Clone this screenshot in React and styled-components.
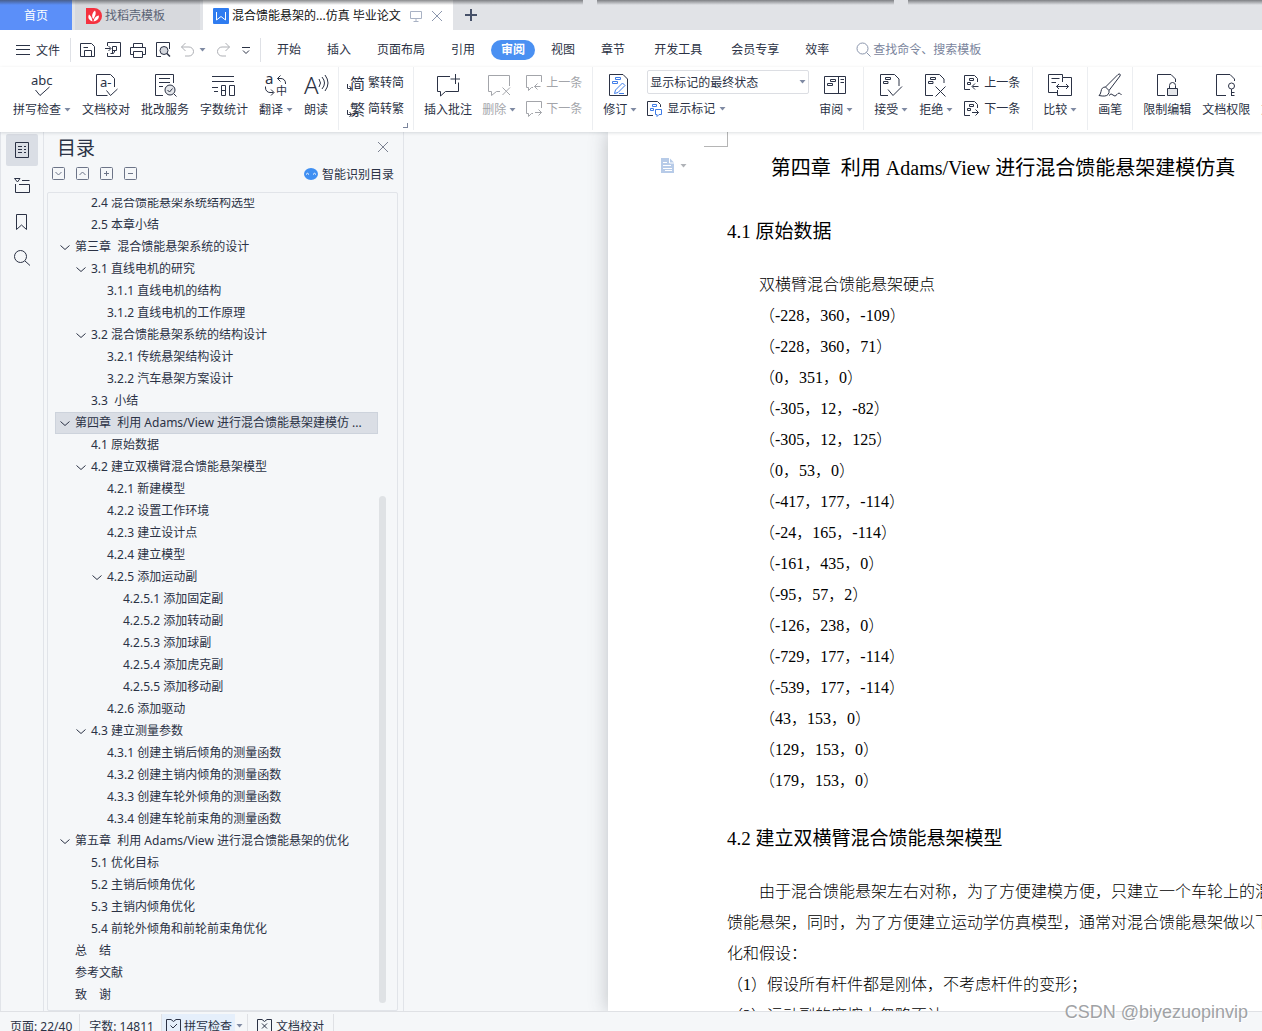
import React from "react";
import styled, { createGlobalStyle, css } from "styled-components";

const GlobalStyle = createGlobalStyle`
  * {
    box-sizing: border-box;
  }
  body {
    margin: 0;
    overflow: hidden;
    font-family: "Noto Sans", "Noto Sans CJK SC", sans-serif;
    font-size: 12px;
    color: #2b3245;
  }
  button {
    margin: 0;
    padding: 0;
    border: none;
    background: none;
    font: inherit;
    color: inherit;
    cursor: pointer;
  }
`;

const Window = styled.div`
  display: flex;
  flex-direction: column;
  height: calc(100vh + 10px);
  background: #f5f7f9;
`;

/* tab strip */

const TabStrip = styled.header`
  position: relative;
  display: flex;
  flex: none;
  gap: 3px;
  height: 30px;
  background: #e1e3e7;
`;

const EdgeShadow = styled.div`
  position: absolute;
  top: 0;
  left: 0;
  right: 0;
  height: 5px;
  display: flex;
  gap: 14px;
  pointer-events: none;
`;

const ShadowPart = styled.span`
  flex: ${(props) => props.$grow};
  background: linear-gradient(rgba(60, 62, 66, 0.6), rgba(60, 62, 66, 0));
`;

const FileTab = styled.button`
  display: flex;
  align-items: center;
  gap: 3px;
  width: ${(props) => props.$width}px;
  padding: 2px 10px 0 11px;
  line-height: 18px;
  white-space: nowrap;
  color: #5b6375;
  background: #d7d9dd;

  ${(props) =>
    props.$home &&
    css`
      justify-content: center;
      padding: 2px 0 0;
      color: #fff;
      background: #5b8ff9;
    `}

  ${(props) =>
    props.$active &&
    css`
      padding-left: 10px;
      color: #111;
      background: #fff;
    `}
`;

const TabTools = styled.span`
  display: flex;
  gap: 9px;
  margin-left: 6px;
`;

const NewTab = styled.button`
  width: 30px;
  display: flex;
  align-items: center;
  justify-content: center;
`;

/* menu row */

const MenuRow = styled.div`
  display: flex;
  flex: none;
  align-items: center;
  height: 37px;
  padding: 2px 0 0 16px;
  background: #fff;
  white-space: nowrap;
`;

const FileMenu = styled.button`
  display: flex;
  align-items: center;
  gap: 6px;
  padding-right: 10px;
`;

const QuickTools = styled.div`
  display: flex;
  align-items: center;
  gap: 9px;
  height: 24px;
  padding: 0 8px 0 9px;
  border-left: 1px solid #dfe1e6;
  border-right: 1px solid #dfe1e6;
`;

const QuickButton = styled.button`
  display: flex;
  align-items: center;
  gap: 3px;
`;

const MenuTabs = styled.nav`
  display: flex;
  gap: 6px;
  padding: 0 6px;
`;

const MenuTab = styled.button`
  height: 20px;
  padding: 0 10px;
  line-height: 20px;
  border-radius: 10px;
  margin-right: ${(props) => (props.$wide ? 3 : 0)}px;

  ${(props) =>
    props.$active &&
    css`
      color: #fff;
      font-weight: 700;
      background: #4a90f2;
    `}
`;

const SearchBox = styled.label`
  display: flex;
  align-items: center;
  gap: 2px;
  margin-left: 11px;
`;

const SearchInput = styled.input`
  width: 150px;
  padding: 0;
  border: none;
  outline: none;
  font: inherit;
  background: none;

  &::placeholder {
    color: #7a849c;
    opacity: 1;
  }
`;

/* ribbon */

const Ribbon = styled.div`
  position: relative;
  z-index: 1;
  display: flex;
  flex: none;
  height: 65px;
  padding-left: 3px;
  background: #fff;
  box-shadow: 0 1px 3px rgba(40, 50, 70, 0.16);
  white-space: nowrap;
`;

const Group = styled.div`
  position: relative;
  display: flex;
  flex: none;
  gap: ${(props) => props.$gap || 11}px;
  height: 63px;
  padding: 5px ${(props) => props.$right || 10}px 0 ${(props) => props.$left || 10}px;
  border-right: 1px solid #eceef1;
`;

const BigButton = styled.button`
  display: flex;
  flex-direction: column;
  align-items: center;
  gap: 4px;
  height: 48px;
  padding-top: 1px;
  color: ${(props) => (props.$dim ? "#a3a5aa" : "inherit")};
`;

const Label = styled.span`
  display: flex;
  align-items: center;
  gap: 3px;
  line-height: 18px;
`;

const Stack = styled.div`
  display: flex;
  flex-direction: column;
  align-items: flex-start;
  gap: 6px;
`;

const SmallButton = styled.button`
  display: flex;
  align-items: center;
  gap: 4px;
  height: 20px;
  padding-top: 2px;
  line-height: 18px;
  color: ${(props) => (props.$dim ? "#a3a5aa" : "inherit")};
`;

const SelectBox = styled.label`
  position: relative;
  display: flex;
  align-items: center;
  margin: -2px 0;

  svg {
    position: absolute;
    right: 3px;
    pointer-events: none;
  }
`;

const Select = styled.select`
  appearance: none;
  width: 162px;
  height: 24px;
  padding: 0 2px;
  border: 1px solid #dcdee3;
  border-radius: 2px;
  background: #fff;
  font: inherit;
  color: inherit;
`;

const GroupCorner = styled.span`
  position: absolute;
  right: 5px;
  bottom: 2px;
  width: 5px;
  height: 5px;
  border-right: 1px solid #7a849c;
  border-bottom: 1px solid #7a849c;
`;

/* body */

const Main = styled.main`
  display: flex;
  flex: 1;
  min-height: 0;
`;

const SideBar = styled.aside`
  display: flex;
  flex: none;
  flex-direction: column;
  gap: 4px;
  padding: 2px 5px;
  border: solid #e1e4e9;
  border-width: 0 1px;
`;

const SideButton = styled.button`
  display: flex;
  align-items: center;
  justify-content: center;
  width: 32px;
  height: 32px;
  border-radius: 2px;
  background: ${(props) => (props.$active ? "#dadee5" : "none")};
`;

const Outline = styled.section`
  display: flex;
  flex: none;
  flex-direction: column;
  width: 360px;
  padding: 0 5px 0 3px;
  border-right: 1px solid #e1e4e9;
`;

const OutlineHeader = styled.div`
  display: flex;
  align-items: center;
  justify-content: space-between;
  height: 30px;
  padding: 2px 9px 0 10px;
`;

const OutlineTitle = styled.h2`
  margin: 0;
  font-size: 19px;
  font-weight: 400;
  line-height: 28px;
`;

const OutlineTools = styled.div`
  display: flex;
  align-items: center;
  gap: 10px;
  height: 24px;
  margin-bottom: 6px;
  padding: 0 4px 0 5px;
`;

const SquareButton = styled.button`
  display: flex;
  width: 14px;
  height: 14px;
  color: #6c7488;
`;

const SmartButton = styled.button`
  display: flex;
  align-items: center;
  gap: 4px;
  margin-left: auto;
`;

const OutlineBox = styled.div`
  display: flex;
  flex: 1;
  min-height: 0;
  padding: 5px 11px 4px 7px;
  border: 1px solid #e1e4e9;
  border-radius: 2px;
`;

const Tree = styled.ul`
  display: flex;
  flex: 1;
  flex-direction: column;
  justify-content: flex-end;
  margin: 0;
  padding: 0;
  overflow: hidden;
  list-style: none;
`;

const TreeItem = styled.li`
  display: flex;
  flex: none;
  align-items: center;
  gap: 4px;
  height: 22px;
  padding-left: ${(props) => props.$level * 16 - 12}px;
  line-height: 22px;
  white-space: pre;
  background: ${(props) => (props.$selected ? "#dadee5" : "none")};
  box-shadow: ${(props) => (props.$selected ? "inset 0 0 0 1px #cdd3dc" : "none")};
`;

const Chevron = styled.span`
  display: flex;
  width: 12px;
`;

const ScrollTrack = styled.div`
  display: flex;
  flex-direction: column;
  justify-content: flex-end;
  width: 8px;
  padding: 0 0 3px 1px;
`;

const ScrollThumb = styled.div`
  height: 63%;
  border-radius: 4px;
  background: #dfe2e5;
`;

/* document */

const Canvas = styled.section`
  flex: 1;
  min-width: 0;
  padding-left: 204px;
  overflow: hidden;
`;

const Paper = styled.article`
  position: relative;
  width: 800px;
  height: 100%;
  padding: 20px 121px 0 119px;
  background: #fff;
  box-shadow: 0 0 18px rgba(60, 66, 76, 0.3);
  font-family: "Liberation Serif", "Noto Sans CJK SC", serif;
  font-size: 16px;
  color: #000;
`;

const MarginCorner = styled.span`
  position: absolute;
  top: 0;
  left: 96px;
  width: 24px;
  height: 15px;
  border: solid #b5b5b5;
  border-width: 0 1px 1px 0;
`;

const SectionMark = styled.button`
  position: absolute;
  top: 26px;
  left: 53px;
  display: flex;
  align-items: center;
  gap: 5px;
`;

const ChapterTitle = styled.h1`
  margin: 0;
  padding-right: 8px;
  font-size: 20px;
  font-weight: 400;
  line-height: 32px;
  text-align: center;
  white-space: pre;
`;

const SectionTitle = styled.h2`
  margin: ${(props) => props.$top}px 0 21px;
  font-size: 19px;
  font-weight: 400;
  line-height: 32px;
`;

const Paragraph = styled.p`
  margin: 0;
  line-height: 31px;
  font-weight: 300;
  text-indent: ${(props) => (props.$flush ? 0 : 32)}px;
`;

/* status bar */

const StatusBar = styled.footer`
  position: relative;
  display: flex;
  flex: none;
  align-items: center;
  height: 30px;
  padding: 0 0 2px 1px;
  border-top: 1px solid #dfe1e5;
  background: #f5f7f9;
`;

const StatusItem = styled.span`
  display: flex;
  align-items: center;
  gap: 4px;
  height: 24px;
  padding: 0 ${(props) => props.$right || 7}px 0 9px;
  border-right: 1px solid #dfe1e5;
`;

const StatusButton = styled.button`
  display: flex;
  align-items: center;
  gap: 3px;
  height: 24px;
  padding: 0 3px 0 4px;
  background: ${(props) => (props.$on ? "#e5effb" : "none")};
`;

const StatusMenu = styled.button`
  display: flex;
  align-items: center;
  height: 24px;
  padding: 0 4px 0 1px;
  border-right: 1px solid #dfe1e5;
`;

const Watermark = styled.div`
  position: absolute;
  top: -12px;
  right: 14px;
  font-family: "Liberation Sans", sans-serif;
  font-size: 18px;
  line-height: 24px;
  color: #a0a2a5;
  text-shadow: 1px 1px 0 #fff;
`;

const Svg = ({ w = 24, h = w, children }) => (
  <svg
    width={w}
    height={h}
    viewBox={`0 0 ${w} ${h}`}
    fill="none"
    stroke="currentColor"
    overflow="visible"
    aria-hidden="true"
  >
    {children}
  </svg>
);

const Glyph = ({ x, y, size, weight = 400, children }) => (
  <text x={x} y={y} fontSize={size} fontWeight={weight} fill="currentColor" stroke="none">
    {children}
  </text>
);

const Caret = ({ color = "#7f8aa3" }) => (
  <svg width="7" height="4" viewBox="0 0 7 4" aria-hidden="true">
    <path d="M0.5 0h6L3.5 3.5z" fill={color} />
  </svg>
);

const marks = "M6.5 4.5h5v2h-5zM4.5 8.5h4.5v2h-4.5z";

const icons = {
  spell: (
    <Svg>
      <Glyph x={1} y={12} size={13}>abc</Glyph>
      <path d="M5.5 17L10 22.5L19.5 14" />
    </Svg>
  ),
  proof: (
    <Svg>
      <path d="M13.5 22.5H2.5V1.5H16.5L20.5 5.5V14M12.5 17.5L16.5 22.5L23.5 16" />
      <Glyph x={6} y={14} size={13}>a-</Glyph>
    </Svg>
  ),
  correct: (
    <Svg>
      <path d="M10 22.5H2.5V1.5H20.5V10M6 5.5H17M6 9.5H17M6 13.5H10" />
      <circle cx="17" cy="17" r="5" fill="#e4e6ea" />
      <path d="M14.5 17L16.5 19L19.5 15.5M21 21L23.5 23.5" />
    </Svg>
  ),
  count: (
    <Svg>
      <path d="M0 3.5H22M0 8.5H22M0 14.5H6M2 18.5H6M9.5 12.5H13.5V22.5H9.5ZM9.5 17.5H13.5M17.5 12.5H22.5V22.5H17.5Z" />
    </Svg>
  ),
  translate: (
    <Svg>
      <Glyph x={1} y={11} size={15}>a</Glyph>
      <Glyph x={12} y={22} size={11}>中</Glyph>
      <path d="M13.5 5.5H17a4.5 4.5 0 0 1 4.5 4.5V11M16.5 2.5L13.5 5.5L16.5 8.5M1.5 13.5V15a4.5 4.5 0 0 0 4.5 4.5H9.5M7 16.5L10 19.5L7 22.5" />
    </Svg>
  ),
  read: (
    <Svg>
      <Glyph x={0} y={21} size={24} weight={300}>A</Glyph>
      <path d="M15 6q3 4 0 8M18 4q5 6 0 12M21 2q6 8 0 16" />
    </Svg>
  ),
  toSimple: (
    <Svg w={17}>
      <Glyph x={3} y={14} size={15}>简</Glyph>
      <path d="M0.5 9V13.5H4M2.5 11L4.5 13.5L2.5 16" />
    </Svg>
  ),
  toTrad: (
    <Svg w={17}>
      <Glyph x={3} y={14} size={15}>繁</Glyph>
      <path d="M0.5 9V13.5H4M2.5 11L4.5 13.5L2.5 16" />
    </Svg>
  ),
  comment: (
    <Svg>
      <path d="M14 3.5H1.5V18.5H4.5V23L9.5 18.5H22.5V9.5M19.5 1V11M14.5 6H24" />
    </Svg>
  ),
  remove: (
    <Svg>
      <path d="M22.5 13V2.5H1.5V18.5H4.5V22.5L9.5 18.5H13M15.5 14.5L23 22M23 14.5L15.5 22" />
    </Svg>
  ),
  commentPrev: (
    <Svg w={16}>
      <path d="M15.5 7V0.5H0.5V12.5H2.5V15.5L5.5 12.5H7M14.5 11.5H8.5M11.5 8.5L8.5 11.5L11.5 14.5" />
    </Svg>
  ),
  commentNext: (
    <Svg w={16}>
      <path d="M15.5 7V0.5H0.5V12.5H2.5V15.5L5.5 12.5H7M9 11.5H15.5M12.5 8.5L15.5 11.5L12.5 14.5" />
    </Svg>
  ),
  revise: (
    <Svg>
      <path d="M1.5 1.5H15L19.5 6V22.5H1.5Z" />
      <path stroke="#3f7de8" d="M7.5 4.5h5v2h-5zM4.5 8.5h5v2h-5zM6.5 20.5L7.5 17L14.5 10L17 12.5L10 19.5ZM11 20.5H16" />
    </Svg>
  ),
  showMarks: (
    <Svg w={16}>
      <path d="M6 14.5H0.5V0.5H10.5L13.5 3.5V6" />
      <path stroke="#3f7de8" d="M5.5 3.5h4v2h-4zM3.5 7.5h3v2h-3zM8.5 8.5h6v5h-2.5l-2 2v-2h-1.5z" />
    </Svg>
  ),
  pane: (
    <Svg>
      <path d="M0.5 3.5H21.5V20.5H0.5ZM14.5 3.5V20.5M16.500 6.5H20M16.500 9.5H20M6.5 6.5h5v2h-5zM3.5 10.500h5v2h-5z" />
    </Svg>
  ),
  accept: (
    <Svg>
      <path d={`M9 22.5H1.5V1.5H15.5L20 6V13M9 16.5L14 22.5L23 13.5${marks}`} />
    </Svg>
  ),
  reject: (
    <Svg>
      <path d={`M9 22.5H1.5V1.5H15.5L20 6V10M11.5 13.5L21.5 23.5M21.5 13.5L11.5 23.5${marks}`} />
    </Svg>
  ),
  changePrev: (
    <Svg w={16}>
      <path d="M6 14.5H0.5V0.5H10.5L13.5 3.5V7M5.5 3.5h4v2h-4zM3.5 7.5h3v2h-3zM14.5 11.5H8.5M11 8.5L8 11.5L11 14.5" />
    </Svg>
  ),
  changeNext: (
    <Svg w={16}>
      <path d="M6 14.5H0.5V0.5H10.5L13.5 3.5V7M5.5 3.5h4v2h-4zM3.5 7.5h3v2h-3zM8 11.5H14.5M11.5 8.5L14.5 11.5L11.5 14.5" />
    </Svg>
  ),
  compare: (
    <Svg>
      <path d="M14.5 4.5V1.5H0.5V19.5H9.5M14.5 4.5H23.5V22.5H9.5V17M14.5 4.5V9M3.5 5.5H11.5M3.5 9.5H8M8.5 13.5H20.5M11 11L8.5 13.5L11 16M18 11L20.5 13.5L18 16" />
    </Svg>
  ),
  brush: (
    <Svg>
      <path d="M7.5 14L20 1.5q3-1.5 2 1.5L11 17.5ZM7.5 14q-4 0-4.5 4.5q-.5 3-2 4q7 1.5 9-1q1.5-2 1-4M11 22.5q2-3 4-.5t4-.5t4.5 .5" />
    </Svg>
  ),
  lock: (
    <Svg>
      <path d="M10 22.5H2.5V1.5H16L20.5 6V9M14.5 15V12.5a3 3 0 0 1 6 0V15" />
      <path d="M12.5 15.5H22.5V22.5H12.5Z" fill="#e4e6ea" />
    </Svg>
  ),
  rights: (
    <Svg>
      <path d="M12 22.5H2.5V1.5H16L20.5 6V8M17.5 16V23M17.5 19.5H20.5M17.5 22.5H20.5" />
      <circle cx="17.5" cy="13" r="3" />
    </Svg>
  ),
};

const quickTools = [
  { name: "保存", d: "M0.5 1.5H11.5L14.5 4.5V14.5H0.5ZM4.5 14V8.5H11.5V14M3.500 5.500H8" },
  { name: "输出为PDF", d: "M2.5 4V0.5H15.5V14.5H2.5V11M0 6.5H5.5M3.5 4L6 6.5L3.5 9M7.5 11.5V4.5H11.5V8.5H7.5M5.5 11.5H8.5L10 8.5" },
  { name: "打印", d: "M3.5 5V1.5H12.5V5M3.5 12.5H0.5V5.5H15.5V12.5H12.5M3.5 9.5H12.5V15.5H3.5Z" },
];

const menuTabs = [
  { name: "开始" },
  { name: "插入" },
  { name: "页面布局" },
  { name: "引用" },
  { name: "审阅", active: true },
  { name: "视图" },
  { name: "章节", wide: true },
  { name: "开发工具", wide: true },
  { name: "会员专享" },
  { name: "效率" },
];

const outline = [
  [2, "2.4 混合馈能悬架系统结构选型"],
  [2, "2.5 本章小结"],
  [1, "第三章  混合馈能悬架系统的设计", true],
  [2, "3.1 直线电机的研究", true],
  [3, "3.1.1 直线电机的结构"],
  [3, "3.1.2 直线电机的工作原理"],
  [2, "3.2 混合馈能悬架系统的结构设计", true],
  [3, "3.2.1 传统悬架结构设计"],
  [3, "3.2.2 汽车悬架方案设计"],
  [2, "3.3  小结"],
  [1, "第四章  利用 Adams/View 进行混合馈能悬架建模仿 ...", true],
  [2, "4.1 原始数据"],
  [2, "4.2 建立双横臂混合馈能悬架模型", true],
  [3, "4.2.1 新建模型"],
  [3, "4.2.2 设置工作环境"],
  [3, "4.2.3 建立设计点"],
  [3, "4.2.4 建立模型"],
  [3, "4.2.5 添加运动副", true],
  [4, "4.2.5.1 添加固定副"],
  [4, "4.2.5.2 添加转动副"],
  [4, "4.2.5.3 添加球副"],
  [4, "4.2.5.4 添加虎克副"],
  [4, "4.2.5.5 添加移动副"],
  [3, "4.2.6 添加驱动"],
  [2, "4.3 建立测量参数", true],
  [3, "4.3.1 创建主销后倾角的测量函数"],
  [3, "4.3.2 创建主销内倾角的测量函数"],
  [3, "4.3.3 创建车轮外倾角的测量函数"],
  [3, "4.3.4 创建车轮前束角的测量函数"],
  [1, "第五章  利用 Adams/View 进行混合馈能悬架的优化", true],
  [2, "5.1 优化目标"],
  [2, "5.2 主销后倾角优化"],
  [2, "5.3 主销内倾角优化"],
  [2, "5.4 前轮外倾角和前轮前束角优化"],
  [1, "总　结"],
  [1, "参考文献"],
  [1, "致　谢"],
];

const points = [
  "-228，360，-109",
  "-228，360，71",
  "0，351，0",
  "-305，12，-82",
  "-305，12，125",
  "0，53，0",
  "-417，177，-114",
  "-24，165，-114",
  "-161，435，0",
  "-95，57，2",
  "-126，238，0",
  "-729，177，-114",
  "-539，177，-114",
  "43，153，0",
  "129，153，0",
  "179，153，0",
];

const Big = ({ icon, label, menu, dim }) => (
  <BigButton $dim={dim} disabled={dim}>
    {icons[icon]}
    <Label>
      {label}
      {menu && <Caret />}
    </Label>
  </BigButton>
);

const Small = ({ icon, label, menu, dim }) => (
  <SmallButton $dim={dim} disabled={dim}>
    {icons[icon]}
    {label}
    {menu && <Caret />}
  </SmallButton>
);

function Tabs() {
  return (
    <TabStrip>
      <FileTab $width={72} $home>首页</FileTab>
      <FileTab $width={125}>
        <Svg w={16}>
          <path d="M0 0H8a8 8 0 0 1 0 16H0Z" fill="#f5313f" stroke="none" />
          <path d="M6.500 13.500C1.500 11.500 2 8.500 3 6.500Q6 8.500 6.500 13.500ZM6.500 10C5.500 7 6.500 4.500 9 2.500Q11 5.500 7.500 11ZM7.500 13.500Q8.500 8 13 7.500Q13 12.500 7.500 13.500Z" fill="#fff" stroke="none" />
        </Svg>
        找稻壳模板
      </FileTab>
      <FileTab $width={250} $active>
        <Svg w={16}>
          <rect width="16" height="16" rx="1" fill="#2f7cf0" stroke="none" />
          <path d="M3.5 4V12L8 8.500L12.5 12V4" stroke="#fff" />
        </Svg>
        混合馈能悬架的...仿真 毕业论文
        <TabTools>
          <Svg w={12}>
            <path d="M0.5 1.5H11.5V8.5H0.5ZM6 9V11M3.5 11.5H8.5" stroke="#a9b2c4" />
          </Svg>
          <Svg w={12}>
            <path d="M1 1L11 11M11 1L1 11" stroke="#8b96ad" />
          </Svg>
        </TabTools>
      </FileTab>
      <NewTab aria-label="新建">
        <Svg w={12}>
          <path d="M6 0V12M0 6H12" stroke="#465169" strokeWidth="2" />
        </Svg>
      </NewTab>
      <EdgeShadow>
        <ShadowPart $grow={583} />
        <ShadowPart $grow={297} />
        <ShadowPart $grow={354} />
      </EdgeShadow>
    </TabStrip>
  );
}

function Menu() {
  return (
    <MenuRow>
      <FileMenu>
        <Svg w={14}>
          <path d="M0 2.5H14M0 6.5H14M0 11.5H14" />
        </Svg>
        文件
      </FileMenu>
      <QuickTools>
        {quickTools.map((tool) => (
          <QuickButton key={tool.name} aria-label={tool.name}>
            <Svg w={16}>
              <path d={tool.d} />
            </Svg>
          </QuickButton>
        ))}
        <QuickButton aria-label="打印预览">
          <Svg w={16}>
            <path d="M6 14.5H1.5V0.5H14.5V7" />
            <circle cx="9" cy="8.5" r="4" fill="#d5d8de" />
            <path d="M12 11.5L15 14.5" strokeWidth="1.5" />
          </Svg>
        </QuickButton>
        <QuickButton aria-label="撤销">
          <Svg w={16}>
            <path d="M5.5 1L1.5 5L5.5 9M1.5 5H9a4.5 4.5 0 0 1 0 9H5" stroke="#aeb0b5" />
          </Svg>
          <Caret />
        </QuickButton>
        <QuickButton aria-label="恢复">
          <Svg w={16}>
            <path d="M10.5 1L14.5 5L10.5 9M14.5 5H7a4.5 4.5 0 0 0 0 9H11" stroke="#aeb0b5" />
          </Svg>
        </QuickButton>
        <QuickButton aria-label="自定义">
          <Svg w={12}>
            <path d="M2 3.5H10M3 6.5L6 9.5L9 6.5" />
          </Svg>
        </QuickButton>
      </QuickTools>
      <MenuTabs>
        {menuTabs.map((tab) => (
          <MenuTab key={tab.name} $active={tab.active} $wide={tab.wide}>
            {tab.name}
          </MenuTab>
        ))}
      </MenuTabs>
      <SearchBox>
        <Svg w={15}>
          <path d="M10.5 10.5L14.5 14.5" stroke="#8b96ad" />
          <circle cx="6.5" cy="6.5" r="5.5" stroke="#8b96ad" />
        </Svg>
        <SearchInput aria-label="查找" placeholder="查找命令、搜索模板" />
      </SearchBox>
    </MenuRow>
  );
}

function ReviewRibbon() {
  return (
    <Ribbon>
      <Group>
        <Big icon="spell" label="拼写检查" menu />
        <Big icon="proof" label="文档校对" />
        <Big icon="correct" label="批改服务" />
        <Big icon="count" label="字数统计" />
        <Big icon="translate" label="翻译" menu />
        <Big icon="read" label="朗读" />
      </Group>
      <Group $left={8} $right={9}>
        <Stack>
          <Small icon="toSimple" label="繁转简" />
          <Small icon="toTrad" label="简转繁" />
        </Stack>
        <GroupCorner />
      </Group>
      <Group $gap={10}>
        <Big icon="comment" label="插入批注" />
        <Big icon="remove" label="删除" menu dim />
        <Stack>
          <Small icon="commentPrev" label="上一条" dim />
          <Small icon="commentNext" label="下一条" dim />
        </Stack>
      </Group>
      <Group $gap={10}>
        <Big icon="revise" label="修订" menu />
        <Stack>
          <SelectBox>
            <Select aria-label="显示状态" defaultValue="final">
              <option value="final">显示标记的最终状态</option>
              <option value="original">显示标记的原始状态</option>
            </Select>
            <Caret />
          </SelectBox>
          <Small icon="showMarks" label="显示标记" menu />
        </Stack>
        <Big icon="pane" label="审阅" menu />
      </Group>
      <Group $right={12}>
        <Big icon="accept" label="接受" menu />
        <Big icon="reject" label="拒绝" menu />
        <Stack>
          <Small icon="changePrev" label="上一条" />
          <Small icon="changeNext" label="下一条" />
        </Stack>
      </Group>
      <Group>
        <Big icon="compare" label="比较" menu />
      </Group>
      <Group>
        <Big icon="brush" label="画笔" />
      </Group>
      <Group>
        <Big icon="lock" label="限制编辑" />
        <Big icon="rights" label="文档权限" />
        <Big icon="proof" label="文档认证" />
      </Group>
    </Ribbon>
  );
}

function SideTools() {
  return (
    <SideBar>
      <SideButton $active aria-label="目录">
        <Svg w={16}>
          <path d="M1.5 0.5H14.5V15.5H1.5ZM4 4.5H8M10 4.5H12M4 7.5H8M10 7.5H12M4 10.5H8M10 10.5H12" />
        </Svg>
      </SideButton>
      <SideButton aria-label="章节">
        <Svg w={16}>
          <path d="M0.5 0.5H6L3.5 4ZM8 2.5H15.5M1.5 6V14.5H15.5V6.5H5" />
        </Svg>
      </SideButton>
      <SideButton aria-label="书签">
        <Svg w={16}>
          <path d="M2.5 0.5H12.5V15.5L7.5 11L2.5 15.5Z" />
        </Svg>
      </SideButton>
      <SideButton aria-label="查找">
        <Svg w={16}>
          <circle cx="6.5" cy="6.5" r="6" />
          <path d="M11 11L16 15.5" />
        </Svg>
      </SideButton>
    </SideBar>
  );
}

const squareTools = [
  { name: "展开", d: "M3.5 5L6.5 8L9.5 5" },
  { name: "收起", d: "M3.5 8L6.5 5L9.5 8" },
  { name: "增加级别", d: "M4 6.5H9M6.5 4V9" },
  { name: "降低级别", d: "M4 6.5H9" },
];

function OutlinePanel() {
  return (
    <Outline>
      <OutlineHeader>
        <OutlineTitle>目录</OutlineTitle>
        <button aria-label="关闭">
          <Svg w={12}>
            <path d="M1 1L11 11M11 1L1 11" stroke="#7b8191" />
          </Svg>
        </button>
      </OutlineHeader>
      <OutlineTools>
        {squareTools.map((tool) => (
          <SquareButton key={tool.name} aria-label={tool.name}>
            <Svg w={14}>
              <rect x="0.5" y="0.5" width="12" height="12" rx="1" />
              <path d={tool.d} />
            </Svg>
          </SquareButton>
        ))}
        <SmartButton>
          <Svg w={14}>
            <ellipse cx="7" cy="7" rx="7" ry="6" fill="#3f8ff2" stroke="none" />
            <path d="M2 7.5q1.5-2.5 3 0M9 7.5q1.5-2.5 3 0" stroke="#fff" />
          </Svg>
          智能识别目录
        </SmartButton>
      </OutlineTools>
      <OutlineBox>
        <Tree>
          {outline.map(([level, text, open], i) => (
            <TreeItem key={text} $level={level} $selected={i === 10}>
              <Chevron>
                {open && (
                  <Svg w={12}>
                    <path d="M1.5 4.5L6 8.5L10.5 4.5" />
                  </Svg>
                )}
              </Chevron>
              {text}
            </TreeItem>
          ))}
        </Tree>
        <ScrollTrack>
          <ScrollThumb />
        </ScrollTrack>
      </OutlineBox>
    </Outline>
  );
}

function Document() {
  return (
    <Canvas>
      <Paper>
        <MarginCorner />
        <SectionMark aria-label="章节选项">
          <Svg w={14} h={16}>
            <path d="M0 0H8.5L13 4.5V15H0Z" fill="#b7cbe8" stroke="none" />
            <path d="M8.5 0V5H13M2 4.5H6M2 7.5H10M2 10.5H11M4 12.5H11" stroke="#fff" />
          </Svg>
          <Caret color="#b0b3b8" />
        </SectionMark>
        <ChapterTitle>{"第四章  利用 Adams/View 进行混合馈能悬架建模仿真"}</ChapterTitle>
        <SectionTitle $top={32}>4.1 原始数据</SectionTitle>
        <Paragraph>双横臂混合馈能悬架硬点</Paragraph>
        {points.map((point) => (
          <Paragraph key={point}>（{point}）</Paragraph>
        ))}
        <SectionTitle $top={27}>4.2 建立双横臂混合馈能悬架模型</SectionTitle>
        <Paragraph>
          由于混合馈能悬架左右对称，为了方便建模方便，只建立一个车轮上的混合馈能悬架，同时，为了方便建立运动学仿真模型，通常对混合馈能悬架做以下简化和假设：
        </Paragraph>
        <Paragraph $flush>（1）假设所有杆件都是刚体，不考虑杆件的变形；</Paragraph>
        <Paragraph $flush>（2）运动副的摩擦力忽略不计；</Paragraph>
      </Paper>
    </Canvas>
  );
}

function Status() {
  return (
    <StatusBar>
      <StatusItem>页面: 22/40</StatusItem>
      <StatusItem>字数: 14811</StatusItem>
      <StatusButton $on>
        <Svg w={15}>
          <path d="M5 1.5H0.5V13.5H14.5V1.5H10L7.5 3.5L5 1.5M4.5 7.5L7 10L11 6" />
        </Svg>
        拼写检查
      </StatusButton>
      <StatusMenu aria-label="拼写检查选项">
        <Caret />
      </StatusMenu>
      <StatusItem $right={9}>
        <Svg w={15}>
          <path d="M5 1.5H0.5V13.5H14.5V1.5H10L7.5 3.5L5 1.5M5 5.5L10 10.5M10 5.5L5 10.5" />
        </Svg>
        文档校对
      </StatusItem>
      <Watermark>CSDN @biyezuopinvip</Watermark>
    </StatusBar>
  );
}

function App() {
  return (
    <>
      <GlobalStyle />
      <Window>
        <Tabs />
        <Menu />
        <ReviewRibbon />
        <Main>
          <SideTools />
          <OutlinePanel />
          <Document />
        </Main>
        <Status />
      </Window>
    </>
  );
}

export default App;
